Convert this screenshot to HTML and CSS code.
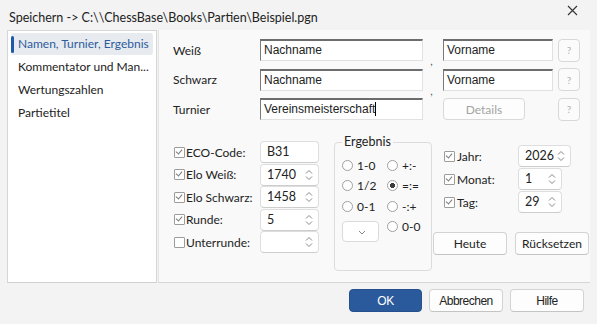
FILE: index.html
```html
<!DOCTYPE html>
<html lang="de">
<head>
    <meta charset="UTF-8">
    <title>Speichern</title>
    <link rel="stylesheet" href="styles.css">
</head>
<body>
    <div class="titlebar">
        <span class="title">Speichern -&gt; C:\\ChessBase\Books\Partien\Beispiel.pgn</span>
        <svg class="close" width="11" height="11" viewBox="0 0 11 11"><path d="M1 1L10 10M10 1L1 10" stroke="#333" stroke-width="1.1"/></svg>
    </div>

    <div class="main">
        <ul class="sidebar">
            <li class="active">Namen, Turnier, Ergebnis</li>
            <li>Kommentator und Man...</li>
            <li>Wertungszahlen</li>
            <li>Partietitel</li>
        </ul>

        <div class="panel">
            <div class="names">
                <span class="lbl">Weiß</span>
                <div class="field">Nachname</div>
                <span class="sep">,</span>
                <div class="field">Vorname</div>
                <button class="help">?</button>

                <span class="lbl">Schwarz</span>
                <div class="field">Nachname</div>
                <span class="sep">,</span>
                <div class="field">Vorname</div>
                <button class="help">?</button>

                <span class="lbl">Turnier</span>
                <div class="field">Vereinsmeisterschaft<span class="caret"></span></div>
                <span></span>
                <button class="btn details">Details</button>
                <button class="help">?</button>
            </div>

            <div class="lower">
                <!-- checkbox + value rows -->
                <div class="meta">
                    <span class="check on"></span><span class="lbl">ECO-Code:</span>
                    <div class="num">B31</div>

                    <span class="check on"></span><span class="lbl">Elo Weiß:</span>
                    <div class="num spin">1740</div>

                    <span class="check on"></span><span class="lbl">Elo Schwarz:</span>
                    <div class="num spin">1458</div>

                    <span class="check on"></span><span class="lbl">Runde:</span>
                    <div class="num spin">5</div>

                    <span class="check"></span><span class="lbl">Unterrunde:</span>
                    <div class="num spin"></div>
                </div>

                <fieldset class="result">
                    <legend>Ergebnis</legend>
                    <div class="radios">
                        <span class="radio">1-0</span>
                        <span class="radio">+:-</span>
                        <span class="radio">1/2</span>
                        <span class="radio on">=:=</span>
                        <span class="radio">0-1</span>
                        <span class="radio">-:+</span>
                        <div class="combo"></div>
                        <span class="radio last">0-0</span>
                    </div>
                </fieldset>

                <div class="date">
                    <div class="date-rows">
                        <span class="check on"></span><span class="lbl">Jahr:</span>
                        <div class="num spin wide">2026</div>

                        <span class="check on"></span><span class="lbl">Monat:</span>
                        <div class="num spin">1</div>

                        <span class="check on"></span><span class="lbl">Tag:</span>
                        <div class="num spin">29</div>
                    </div>
                    <div class="date-buttons">
                        <button class="btn">Heute</button>
                        <button class="btn">Rücksetzen</button>
                    </div>
                </div>
            </div>
        </div>
    </div>

    <div class="footer">
        <button class="btn dlg primary">OK</button>
        <button class="btn dlg">Abbrechen</button>
        <button class="btn dlg">Hilfe</button>
    </div>
</body>
</html>
```

FILE: styles.css
```css
body {
    margin: 0;
    width: 597px;
    height: 324px;
    overflow: hidden;
    background-color: #f3f3f3;
    font-family: Lato, "Liberation Sans", sans-serif;
    font-size: 12px;
    color: #222;
}

button {
    font-family: inherit;
    font-size: 12px;
    color: #222;
}

.titlebar {
    height: 30px;
    display: flex;
    justify-content: space-between;
    padding: 0 19px 0 9px;
}

.title {
    margin-top: 10px;
    font-size: 12.5px;
}

.close {
    margin-top: 5px;
}

.main {
    display: flex;
    height: 253px;
    padding-left: 7px;
    padding-right: 7px;
}

.sidebar {
    list-style: none;
    margin: 0;
    width: 142px;
    padding: 2px 3px;
    background-color: #fff;
    border: 1px solid #d6d6d6;
    border-bottom-color: #cfcfcf;
}

.sidebar li {
    height: 22px;
    line-height: 22px;
    padding-left: 7px;
    margin-bottom: 1px;
    border-radius: 3px;
    white-space: nowrap;
    position: relative;
}

.sidebar li.active {
    background-color: #e7eaee;
    color: #2c5d9f;
}

.sidebar li.active::before {
    content: "";
    position: absolute;
    left: 0;
    top: 3px;
    width: 3px;
    height: 17px;
    border-radius: 2px;
    background-color: #1d5aab;
}

.panel {
    flex: 1;
    margin-left: 1px;
    background-color: #f9f9f9;
    border-bottom: 1px solid #d6d6d6;
    border-left: 1px solid #e4e4e4;
    padding: 9px 0 0 14px;
}

/* name rows */
.names {
    display: grid;
    grid-template-columns: 87px 163px 20px 110px 27px;
    grid-auto-rows: 22px;
    row-gap: 7.5px;
    align-items: center;
}

.field {
    height: 22px;
    box-sizing: border-box;
    background-color: #fff;
    border: 1px solid #e1e1e1;
    border-top: 2px solid #6d6d6d;
    border-left: 1px solid #7a7a7a;
    padding: 2px 0 0 3px;
    font-family: "Liberation Sans", Arial, sans-serif;
    font-size: 12px;
    line-height: 15px;
}

.caret {
    display: inline-block;
    width: 1px;
    height: 14px;
    background-color: #000;
    vertical-align: -3px;
}

.sep {
    align-self: end;
    text-align: center;
    font-size: 11px;
    line-height: 8px;
    margin-bottom: -4px;
    margin-left: -3px;
    color: #555;
}

.help {
    justify-self: end;
    width: 22px;
    height: 23px;
    padding: 0;
    border: 1px solid #d8d8d8;
    border-radius: 4px;
    background-color: #fbfbfb;
    color: #b0b0b0;
    font-size: 10px;
}

.btn {
    height: 22px;
    padding: 0;
    border: 1px solid #d3d3d3;
    border-bottom-color: #c4c4c4;
    border-radius: 4px;
    background-color: #fdfdfd;
}

.details {
    width: 82px;
    color: #a3a3a3;
    border-color: #d9d9d9;
}

/* lower block */
.lower {
    display: flex;
    margin-top: 14px;
}

.meta,
.date-rows {
    display: grid;
    grid-template-columns: 12px 74px auto;
    grid-auto-rows: 22px;
    row-gap: 0.5px;
    align-items: center;
}

.meta {
    margin-top: 7px;
    margin-left: 1px;
}

.check {
    width: 9px;
    height: 9px;
    border: 1px solid #9c9c9c;
    border-radius: 1px;
    background-color: #fff;
    position: relative;
}

.check.on::after {
    content: "";
    position: absolute;
    left: 2px;
    top: 0;
    width: 3px;
    height: 5px;
    border-right: 1.2px solid #7a7a7a;
    border-bottom: 1.2px solid #7a7a7a;
    transform: rotate(40deg);
}

.lbl {
    white-space: nowrap;
}

.num {
    width: 59px;
    height: 22px;
    box-sizing: border-box;
    background-color: #fff;
    border: 1px solid #dedede;
    border-bottom-color: #cdcdcd;
    border-radius: 4px;
    padding-left: 6px;
    line-height: 20px;
    font-size: 12.5px;
    position: relative;
}

.num.spin::after {
    content: "";
    position: absolute;
    right: 5px;
    top: 4px;
    width: 8px;
    height: 12px;
    background-image: url("data:image/svg+xml;utf8,<svg xmlns='http://www.w3.org/2000/svg' width='8' height='12'><path d='M1 4.5L4 1.5L7 4.5M1 7.5L4 10.5L7 7.5' fill='none' stroke='%23888' stroke-width='1'/></svg>");
}

fieldset.result {
    margin: 0 0 0 15px;
    padding: 0 6px 0 7px;
    width: 98px;
    height: 137px;
    box-sizing: border-box;
    border: 1px solid #dcdcdc;
    border-radius: 4px;
}

.result legend {
    padding: 0 2px;
    font-size: 12.5px;
    line-height: 16px;
}

.radios {
    display: grid;
    grid-template-columns: 45px auto;
    grid-template-rows: 20px 21px 20px 27px;
    align-items: center;
    margin-top: 5px;
}

.radio {
    display: flex;
    align-items: center;
    gap: 4px;
}

.radio::before {
    content: "";
    width: 9px;
    height: 9px;
    border: 1px solid #a0a0a0;
    border-radius: 50%;
    background-color: #fff;
}

.radio.on::before {
    background: radial-gradient(circle, #3b3b3b 0 2.3px, #fff 2.8px);
}

.radio.last {
    align-self: start;
    margin-top: 3px;
}

.combo {
    width: 37px;
    height: 21px;
    box-sizing: border-box;
    margin-top: 5px;
    align-self: start;
    background-color: #fff;
    border: 1px solid #dadada;
    border-radius: 4px;
    background-image: url("data:image/svg+xml;utf8,<svg xmlns='http://www.w3.org/2000/svg' width='8' height='5'><path d='M1 1L4 4L7 1' fill='none' stroke='%23888' stroke-width='1'/></svg>");
    background-repeat: no-repeat;
    background-position: 15px 8px;
}

.date {
    margin-left: 1px;
    display: flex;
    flex-direction: column;
}

.date-rows {
    margin-top: 11px;
    margin-left: 11px;
    grid-template-columns: 13px 61px auto;
    row-gap: 1px;
}

.date-rows .num {
    width: 44px;
}

.date-rows .num.wide {
    width: 53px;
}

.date-buttons {
    display: flex;
    gap: 8px;
    margin-top: 19px;
}

.date-buttons .btn {
    width: 74px;
    height: 23px;
}

.footer {
    display: flex;
    justify-content: flex-end;
    gap: 7px;
    padding: 6px 13px 0 0;
}

.dlg {
    width: 74px;
    height: 23px;
    font-family: "Liberation Sans", Arial, sans-serif;
    font-size: 12px;
    letter-spacing: -0.5px;
}

.dlg.primary {
    width: 73px;
    background-color: #2b5a9c;
    border-color: #24508d;
    color: #fff;
}
```
